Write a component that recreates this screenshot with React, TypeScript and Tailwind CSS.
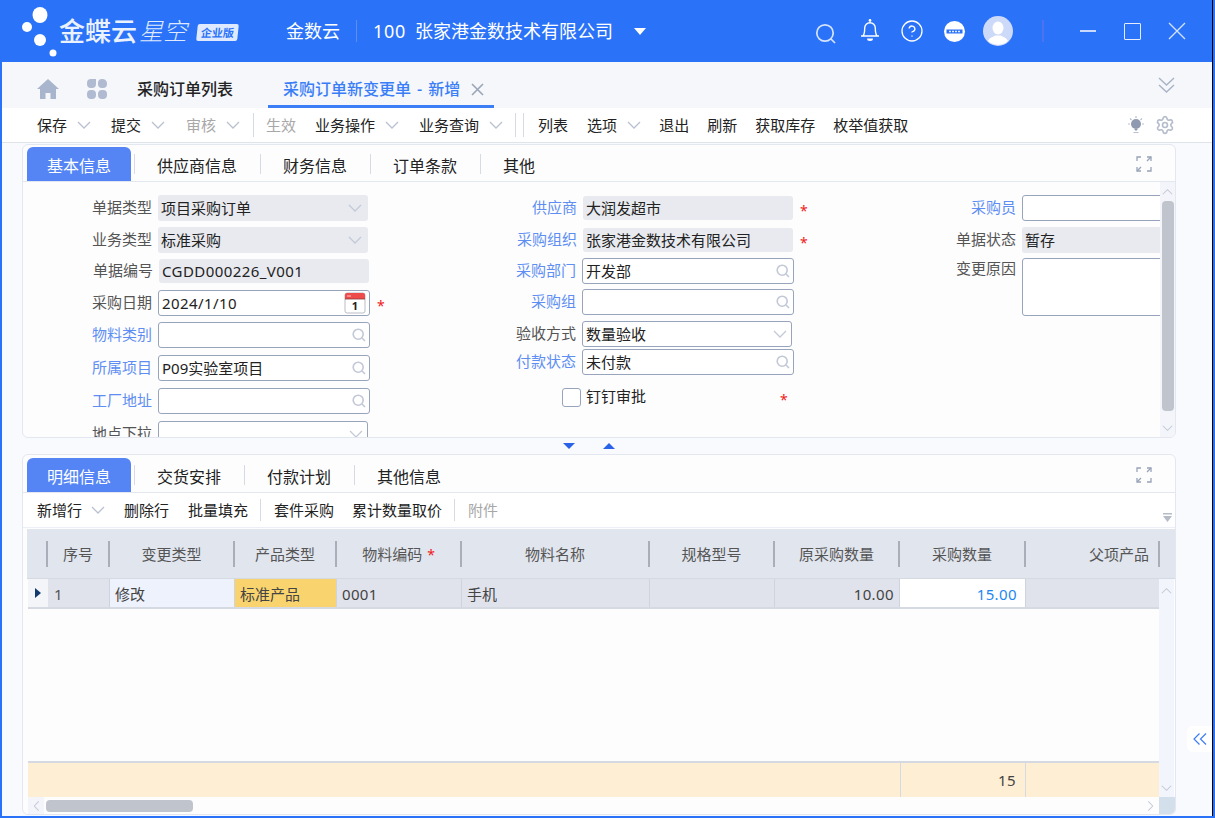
import React from 'react';
import { CircleHelp, Settings } from 'lucide-react';

function Chev({ className = 'text-[#c3cad8]', w = 14, h = 8 }: { className?: string; w?: number; h?: number }) {
  return (
    <svg width={w} height={h} viewBox="0 0 14 8" fill="none" stroke="currentColor" strokeWidth="1.3" className={className} preserveAspectRatio="none">
      <path d="M1 1l6 6 6-6" />
    </svg>
  );
}

function SearchIcon() {
  return (
    <svg width="14" height="14" viewBox="0 0 14 14" fill="none" stroke="#c2c8d6" strokeWidth="1.6">
      <circle cx="6.2" cy="6.2" r="5" />
      <path d="M10 10l3 3" />
    </svg>
  );
}

function CalendarIcon() {
  return (
    <svg width="22" height="22" viewBox="0 0 22 22">
      <rect x="1" y="1" width="20" height="20" rx="2" fill="#fff" stroke="#b9bdc6" />
      <path d="M1 3a2 2 0 0 1 2-2h16a2 2 0 0 1 2 2v4H1z" fill="#ee4b4b" />
      <path d="M1 7h20" stroke="#8d3a3a" strokeWidth="0.8" />
      <path d="M3 4h4" stroke="#fff" strokeWidth="1" opacity="0.7" />
      <text x="11" y="18" fontSize="11" fontWeight="700" textAnchor="middle" fill="#222">1</text>
    </svg>
  );
}

function ExpandIcon() {
  return (
    <svg width="16" height="16" viewBox="0 0 16 16" fill="none" stroke="#98a3b8" strokeWidth="1.3">
      <path d="M1 5V1h4M11 1h4v4M1 11v4h4M11 15h4v-4" />
      <path d="M15 1l-4 4M1 15l4-4" />
    </svg>
  );
}

function Star({ className = 'ml-[7px]' }: { className?: string }) {
  return <span className={`${className} w-[8px] pt-[5px] text-[14px] leading-none text-[#f01a1a]`}>*</span>;
}

type FieldProps = {
  label: string;
  value?: string;
  blue?: boolean;
  gray?: boolean;
  icon?: 'chev' | 'search' | 'cal';
  star?: boolean;
  row: string;
  labelW: string;
  box: string;
};

// latin-only values run a bit wider in the reference font
const isLatin = (s?: string) => !!s && /^[\x00-\x7f]+$/.test(s);

function Field({ label, value, blue, gray, icon, star, row, labelW, box }: FieldProps) {
  return (
    <div className={`flex items-center ${row}`}>
      <div className={`${labelW} shrink-0 pr-[6px] pb-[2px] text-right leading-none whitespace-nowrap ${blue ? 'text-[#5e8ef2]' : 'text-[#555]'}`}>{label}</div>
      <div
        className={`flex h-full shrink-0 items-center justify-between rounded-[3px] ${box} ${
          gray ? 'bg-[#e8eaef] pr-[5px] pl-[3px]' : 'border border-[#98a4bc] bg-white pr-[3px] pl-[3px]'
        }`}
      >
        <span className={`leading-none whitespace-nowrap text-[#222] ${isLatin(value) ? 'tracking-[0.42px]' : ''}`}>{value}</span>
        {icon === 'chev' && <Chev className="mr-[1px] text-[#c3c9d6]" />}
        {icon === 'search' && <SearchIcon />}
        {icon === 'cal' && <CalendarIcon />}
      </div>
      {star && <Star />}
    </div>
  );
}

function TabBar({ active, tabs }: { active: string; tabs: string[] }) {
  return (
    <div className="flex h-[37px] shrink-0 items-center border-b border-[#e3e7f0] pt-[2px] pl-[4px]">
      <div className="flex h-[34px] w-[104px] items-center justify-center rounded-t-[6px] bg-[#5585f5] pt-[3px] text-[16px] text-white">{active}</div>
      <div className="ml-[3px] flex items-center">
        {tabs.map((t) => (
          <div key={t} className="flex h-[20px] items-center border-l border-[#d5dae4] pr-[23px] pl-[22px] text-[16px] text-[#222]">
            <span className="pt-[3px]">{t}</span>
          </div>
        ))}
      </div>
      <div className="mr-[23px] ml-auto">
        <ExpandIcon />
      </div>
    </div>
  );
}

const TOP_ITEMS = [
  { t: '保存', chev: true, ml: 'ml-[35px]' },
  { t: '提交', chev: true, ml: 'ml-[20px]' },
  { t: '审核', chev: true, gray: true, ml: 'ml-[21px]' },
];

const COLS = [
  { t: '序号', w: 'w-[62px]', c: '1', cell: 'bg-[#e0e3ec] pl-[6px] text-[#555]' },
  { t: '变更类型', w: 'w-[125px]', c: '修改', cell: 'bg-[#eef2fd] pl-[5px]' },
  { t: '产品类型', w: 'w-[102px]', c: '标准产品', cell: 'bg-[#f9d46e] pl-[5px]' },
  { t: '物料编码', star: true, w: 'w-[125px]', c: '0001', cell: 'bg-[#e0e3ec] pl-[5px] tracking-[0.3px]' },
  { t: '物料名称', w: 'w-[188px]', c: '手机', cell: 'bg-[#e0e3ec] pl-[5px]' },
  { t: '规格型号', w: 'w-[125px]', c: '', cell: 'bg-[#e0e3ec]' },
  { t: '原采购数量', w: 'w-[125px]', c: '10.00', cell: 'justify-end bg-[#e0e3ec] pr-[5px] tracking-[0.4px]' },
  { t: '采购数量', w: 'w-[126px]', c: '15.00', cell: 'justify-end bg-white pr-[8px] text-[#1e88f0] tracking-[0.4px]' },
  { t: '父项产品', w: 'w-[134px]', c: '', cell: 'bg-[#e0e3ec]', right: true },
];

export default function App() {
  const font = "font-['Noto_Sans','Noto_Sans_CJK_SC',sans-serif]";
  return (
    <div className={`h-[818px] w-[1215px] overflow-hidden bg-[#2a72f8] pr-[2px] pb-[2px] text-[15px] ${font}`}>
      <div className="flex h-full flex-col border-r border-black">
        {/* title bar */}
        <div className="flex h-[62px] shrink-0 items-center bg-[#2a72f8] text-white">
          <svg width="42" height="62" viewBox="0 0 42 62" className="ml-[18px] shrink-0" fill="#fff">
            <ellipse cx="22" cy="15" rx="7.5" ry="8" />
            <circle cx="9" cy="27" r="5" />
            <circle cx="22" cy="40" r="6" />
            <circle cx="35" cy="53" r="3.5" />
          </svg>
          <span className="-ml-px text-[26px] leading-none font-medium text-[#eaf1ff]">金蝶云</span>
          <span className="ml-[2px] text-[24px] leading-none font-light text-[#dfe9ff] italic">星空</span>
          <span className="mt-[2px] ml-[10px] flex h-[17px] w-[41px] -skew-x-6 items-center justify-center rounded-[2px] bg-[#dfe9ff] text-[11px] leading-none font-bold text-[#2a72f8]">
            企业版
          </span>
          <span className="ml-[48px] text-[18px] leading-none">金数云</span>
          <span className="mx-[16px] h-[22px] w-px bg-[#5b8df5]" />
          <span className="text-[18px] leading-none tracking-[0.7px]">100</span>
          <span className="ml-[9px] text-[18px] leading-none whitespace-nowrap">张家港金数技术有限公司</span>
          <svg width="12" height="7" viewBox="0 0 12 7" fill="#fff" className="ml-[21px]">
            <path d="M0 0h12L6 7z" />
          </svg>
          <svg width="22" height="22" viewBox="0 0 22 22" fill="none" stroke="#d5e3ff" strokeWidth="1.7" className="mt-[5px] ml-[169px]">
            <circle cx="10" cy="10" r="8.2" />
            <path d="M16 16l4 4" />
          </svg>
          <svg width="22" height="24" viewBox="0 0 22 24" fill="none" stroke="#fff" strokeWidth="1.4" className="-mt-[3px] ml-[22px]">
            <path d="M2 18h18M4 18c1.500-2 1.700-4 1.700-8a5.300 5.300 0 0 1 10.600 0c0 4 .2 6 1.700 8" />
            <circle cx="11" cy="2.500" r=".7" />
            <path d="M8 20.500h6a3 2.500 0 0 1-6 0z" fill="#fff" stroke="none" />
          </svg>
          <CircleHelp size={24} strokeWidth={1.3} color="#fff" className="ml-[19px]" />
          <svg width="21" height="21" viewBox="0 0 21 21" className="ml-[20px]">
            <circle cx="10.500" cy="10.500" r="10.500" fill="#fff" />
            <rect x="2.500" y="8.500" width="16" height="4" fill="#2a72f8" />
            <path d="M5 10.500h11" stroke="#dfe9ff" strokeWidth="1.600" strokeDasharray="2 1" />
          </svg>
          <svg width="30" height="30" viewBox="0 0 30 30" className="ml-[18px]">
            <circle cx="15" cy="15" r="15" fill="#cdd9f8" />
            <ellipse cx="15" cy="12" rx="5.500" ry="6.500" fill="#fff" />
            <path d="M5 25c2-4 6-4.500 7.500-5.500h5C19 20.500 23 21 25 25a15 15 0 0 1-20 0z" fill="#fff" />
          </svg>
          <span className="ml-[29px] h-[22px] w-[2px] bg-[#4f72f3]" />
          <span className="ml-[36px] h-[2px] w-[16px] bg-[#c7d9fc]" />
          <span className="ml-[28px] h-[17px] w-[17px] rounded-[1px] border-[1.5px] border-[#e4edff]" />
          <svg width="18" height="18" viewBox="0 0 18 18" stroke="#d5e3ff" strokeWidth="1.3" className="ml-[27px]">
            <path d="M1 1l16 16M17 1L1 17" />
          </svg>
        </div>

        {/* window body */}
        <div className="relative ml-[2px] flex min-h-0 flex-1 flex-col bg-[#f9fafe]">
          {/* page tabs */}
          <div className="flex h-[46px] shrink-0 items-center bg-[#f5f7fb] pt-[8px] text-[16px] leading-none">
            <svg width="22" height="20" viewBox="0 0 22 20" fill="#a9b5cc" className="ml-[35px]">
              <path d="M11 0L0 10h3v10h5.500v-6h5v6H19V10h3z" />
            </svg>
            <svg width="20" height="20" viewBox="0 0 20 20" fill="#b0bbd1" className="ml-[28px]">
              <path d="M4 0h5v5a4 4 0 0 1-4 4H4a4 4 0 0 1-4-4V4a4 4 0 0 1 4-4zM15 0a5 5 0 0 1 5 4v1a4 4 0 0 1-4 4h-1a4 4 0 0 1-4-4V4a4 4 0 0 1 4-4zM4 11h1a4 4 0 0 1 4 4v1a4 4 0 0 1-4 4H4a4 4 0 0 1-4-4v-1a4 4 0 0 1 4-4zM15 11h1a4 4 0 0 1 4 4v1a4 4 0 0 1-4 4h-1a4 4 0 0 1-4-4v-1a4 4 0 0 1 4-4z" />
            </svg>
            <span className="ml-[30px] font-medium text-[#222]">采购订单列表</span>
            <div className="ml-[35px] flex h-full w-[226px] items-center border-b-[3px] border-[#3d7df5] pt-[3px] pl-[15px] font-medium whitespace-nowrap text-[#3a7ef7]">
              采购订单新变更单<span className="mx-[6px]">-</span>新增
              <svg width="13" height="13" viewBox="0 0 13 13" stroke="#9aa5b8" strokeWidth="1.6" className="ml-[11px]">
                <path d="M1 1l11 11M12 1L1 12" />
              </svg>
            </div>
            <svg width="17" height="16" viewBox="0 0 17 16" fill="none" stroke="#a9b3c6" strokeWidth="1.4" className="mr-[37px] mb-[9px] ml-auto">
              <path d="M1 1l7.500 7L16 1M1 8l7.500 7L16 8" />
            </svg>
          </div>

          {/* main toolbar */}
          <div className="flex h-[35px] shrink-0 items-center border-b border-[#dfe3ea] bg-white leading-none whitespace-nowrap text-[#222]">
            {TOP_ITEMS.map((i) => (
              <React.Fragment key={i.t}>
                <span className={`${i.ml} ${i.gray ? 'text-[#a8a8a8]' : ''}`}>{i.t}</span>
                <Chev className="ml-[10px] text-[#b9c1d0]" />
              </React.Fragment>
            ))}
            <span className="ml-[13px] h-[24px] w-px bg-[#d5dae4]" />
            <span className="ml-[12px] text-[#a8a8a8]">生效</span>
            <span className="ml-[19px]">业务操作</span>
            <Chev className="ml-[10px] text-[#b9c1d0]" />
            <span className="ml-[20px]">业务查询</span>
            <Chev className="ml-[10px] text-[#b9c1d0]" />
            <span className="ml-[12px] h-[24px] w-px bg-[#d5dae4]" />
            <span className="ml-[7px] h-[24px] w-px bg-[#d5dae4]" />
            <span className="ml-[14px]">列表</span>
            <span className="ml-[19px]">选项</span>
            <Chev className="ml-[10px] text-[#b9c1d0]" />
            <span className="ml-[18px]">退出</span>
            <span className="ml-[18px]">刷新</span>
            <span className="ml-[18px]">获取库存</span>
            <span className="ml-[18px]">枚举值获取</span>
            <svg width="18" height="18" viewBox="0 0 18 18" className="mr-[1px] ml-auto" stroke="#b7bfcd" strokeWidth="1.200">
              <path d="M9 0v2M1 8h2M15 8h2M3 2.500l1.500 1.500M15 2.500L13.500 4M6.500 16.500h5" />
              <circle cx="9" cy="8" r="5" fill="#8f9ab0" stroke="none" />
              <path d="M7 13h4L9 15z" fill="#8f9ab0" stroke="none" />
            </svg>
            <Settings size={20} strokeWidth={2} color="#b5bdcc" className="mr-[37px] ml-[9px]" />
          </div>

          {/* upper panel */}
          <div className="mt-[1px] ml-[20px] flex h-[294px] w-[1154px] shrink-0 flex-col overflow-hidden rounded-[6px] border border-[#e3e7f0] bg-[#fdfdfe]">
            <TabBar active="基本信息" tabs={['供应商信息', '财务信息', '订单条款', '其他']} />
            <div className="flex min-h-0 flex-1">
              <div className="flex min-w-0 flex-1 overflow-hidden">
                <div className="w-[371px] shrink-0">
                  <Field label="单据类型" value="项目采购订单" gray icon="chev" labelW="w-[135px]" box="w-[210px]" row="mt-[13px] h-[26px]" />
                  <Field label="业务类型" value="标准采购" gray icon="chev" labelW="w-[135px]" box="w-[210px]" row="mt-[6px] h-[26px]" />
                  <Field label="单据编号" value="CGDD000226_V001" gray labelW="w-[136px]" box="w-[210px]" row="mt-[6px] h-[24px]" />
                  <Field label="采购日期" value="2024/1/10" icon="cal" star labelW="w-[135px]" box="w-[212px]" row="mt-[7px] h-[26px]" />
                  <Field label="物料类别" blue icon="search" labelW="w-[135px]" box="w-[212px]" row="mt-[6px] h-[26px]" />
                  <Field label="所属项目" value="P09实验室项目" blue icon="search" labelW="w-[135px]" box="w-[212px]" row="mt-[7px] h-[26px]" />
                  <Field label="工厂地址" blue icon="search" labelW="w-[135px]" box="w-[212px]" row="mt-[7px] h-[26px]" />
                  <Field label="地点下拉" icon="chev" labelW="w-[135px]" box="w-[210px]" row="mt-[7px] h-[26px]" />
                </div>
                <div className="w-[436px] shrink-0">
                  <Field label="供应商" value="大润发超市" gray blue star labelW="w-[189px]" box="w-[210px]" row="mt-[14px] h-[24px]" />
                  <Field label="采购组织" value="张家港金数技术有限公司" gray blue star labelW="w-[189px]" box="w-[210px]" row="mt-[8px] h-[24px]" />
                  <Field label="采购部门" value="开发部" blue icon="search" labelW="w-[188px]" box="w-[212px]" row="mt-[6px] h-[26px]" />
                  <Field label="采购组" blue icon="search" labelW="w-[188px]" box="w-[212px]" row="mt-[5px] h-[26px]" />
                  <Field label="验收方式" value="数量验收" icon="chev" labelW="w-[188px]" box="w-[210px]" row="mt-[6px] h-[26px]" />
                  <Field label="付款状态" value="未付款" blue icon="search" labelW="w-[188px]" box="w-[212px]" row="mt-[2px] h-[26px]" />
                  <div className="mt-[12px] ml-[168px] flex h-[20px] items-center">
                    <span className="h-[19px] w-[19px] rounded-[3px] border border-[#98a4bc] bg-white" />
                    <span className="ml-[5px] pb-[2px] leading-none text-[#222]">钉钉审批</span>
                    <Star className="ml-[134px]" />
                  </div>
                </div>
                <div className="w-[400px] shrink-0">
                  <Field label="采购员" blue labelW="w-[192px]" box="w-[160px]" row="mt-[13px] h-[26px]" />
                  <Field label="单据状态" value="暂存" gray labelW="w-[192px]" box="w-[160px]" row="mt-[6px] h-[26px]" />
                  <div className="mt-[5px] flex h-[58px]">
                    <div className="w-[192px] pt-[3px] pr-[6px] text-right leading-none text-[#555]">变更原因</div>
                    <div className="w-[160px] rounded-[3px] border border-[#98a4bc] bg-white" />
                  </div>
                </div>
              </div>
              <div className="flex w-[15px] shrink-0 flex-col items-center bg-[#f3f5fb] pt-[7px] pb-[6px]">
                <Chev w={11} h={6} className="rotate-180 text-[#c3c9d6]" />
                <div className="mt-[6px] h-[210px] w-[12px] rounded-[4px] bg-[#c0c4cc]" />
                <Chev w={11} h={6} className="mt-auto text-[#c3c9d6]" />
              </div>
            </div>
          </div>

          {/* splitter */}
          <div className="flex h-[16px] shrink-0 items-center gap-[28px] pl-[561px]">
            <svg width="12" height="6" viewBox="0 0 12 6" fill="#2a62e8">
              <path d="M0 0h12L6 6z" />
            </svg>
            <svg width="12" height="6" viewBox="0 0 12 6" fill="#2a62e8">
              <path d="M0 6h12L6 0z" />
            </svg>
          </div>

          {/* lower panel */}
          <div className="mb-[1px] ml-[20px] flex min-h-0 w-[1154px] flex-1 flex-col overflow-hidden rounded-[6px] border border-[#e3e7f0] bg-[#fdfdfe]">
            <div className="h-[1px] shrink-0" />
            <TabBar active="明细信息" tabs={['交货安排', '付款计划', '其他信息']} />
            <div className="flex h-[35px] shrink-0 items-center border-b border-[#eceff5] bg-white pl-[14px] leading-none whitespace-nowrap text-[#222]">
              <span>新增行</span>
              <Chev className="ml-[9px] text-[#b9c1d0]" />
              <span className="ml-[19px]">删除行</span>
              <span className="ml-[19px]">批量填充</span>
              <span className="ml-[12px] h-[22px] w-px bg-[#d5dae4]" />
              <span className="ml-[13px]">套件采购</span>
              <span className="ml-[18px]">累计数量取价</span>
              <span className="ml-[12px] h-[22px] w-px bg-[#d5dae4]" />
              <span className="ml-[13px] text-[#a8a8a8]">附件</span>
              <svg width="9" height="9" viewBox="0 0 9 9" fill="#b5bbc7" className="mt-[14px] mr-[3px] ml-auto">
                <path d="M0 0h9v1.500H0zM0 3h9L4.500 9z" />
              </svg>
            </div>

            {/* grid header */}
            <div className="mt-[1px] ml-[4px] flex h-[50px] shrink-0 items-center border-b border-[#d5d9e2] bg-[#e1e5ee] leading-none whitespace-nowrap text-[#555]">
              <div className="flex w-[21px] justify-end">
                <span className="h-[26px] w-[2px] bg-[#a9aeb8]" />
              </div>
              {COLS.map((c) => (
                <div key={c.t} className={`flex shrink-0 items-center ${c.w}`}>
                  <div className={`flex flex-1 items-center pt-[2px] ${c.right ? 'justify-end pr-[9px]' : 'justify-center'}`}>
                    {c.t}
                    {c.star && <span className="ml-[5px] text-[14px] text-[#f01a1a]">*</span>}
                  </div>
                  <span className="h-[26px] w-[2px] bg-[#a9aeb8]" />
                </div>
              ))}
            </div>

            {/* grid body */}
            <div className="ml-[5px] flex min-h-0 flex-1">
              <div className="flex w-[1131px] shrink-0 flex-col">
                <div className="flex h-[30px] shrink-0 border-b-2 border-[#d5d9e2] leading-none text-[#444]">
                  <div className="flex w-[20px] shrink-0 items-center bg-[#f4f5f8] pl-[7px]">
                    <svg width="6" height="10" viewBox="0 0 6 10" fill="#123a70">
                      <path d="M0 0l6 5-6 5z" />
                    </svg>
                  </div>
                  {COLS.map((c) => (
                    <div key={c.t} className={`flex shrink-0 items-center border-r border-[#cfd3dd] pt-[3px] ${c.w} ${c.cell}`}>
                      {c.c}
                    </div>
                  ))}
                </div>
                <div className="flex-1" />
                <div className="flex h-[36px] shrink-0 border-t-2 border-[#d5d9e2] bg-[#fdeed4] leading-none text-[#444]">
                  <div className="w-[873px] border-r border-[#d5d9e2]" />
                  <div className="flex w-[125px] items-center justify-end border-r border-[#d5d9e2] pr-[9px] tracking-[0.4px]">15</div>
                </div>
              </div>
              <div className="flex w-[15px] shrink-0 flex-col items-center bg-[#f2f5fb] pt-[9px] pb-[6px]">
                <Chev w={11} h={6} className="rotate-180 text-[#c3c9d6]" />
                <Chev w={11} h={6} className="mt-auto text-[#c3c9d6]" />
              </div>
            </div>

            {/* horizontal scrollbar */}
            <div className="ml-[5px] flex h-[17px] shrink-0 items-center">
              <div className="flex h-full w-[16px] items-center justify-center bg-[#f3f5fb]">
                <Chev w={11} h={6} className="rotate-90 text-[#c3c9d6]" />
              </div>
              <div className="ml-[2px] h-[12px] w-[147px] rounded-[4px] bg-[#c0c4cc]" />
              <div className="mr-[3px] ml-auto">
                <Chev w={11} h={6} className="-rotate-90 text-[#c3c9d6]" />
              </div>
              <div className="h-full w-[16px] bg-[#d3e0ec]" />
            </div>
          </div>

          {/* side collapse handle */}
          <div className="absolute top-[664px] right-0 flex h-[26px] w-[25px] items-center justify-center rounded-l-[6px] bg-white">
            <svg width="14" height="12" viewBox="0 0 14 12" fill="none" stroke="#3d7df5" strokeWidth="1.2">
              <path d="M6.500 0.500L1 6l5.500 5.500M13 0.500L7.500 6l5.500 5.500" />
            </svg>
          </div>
        </div>
      </div>
    </div>
  );
}
